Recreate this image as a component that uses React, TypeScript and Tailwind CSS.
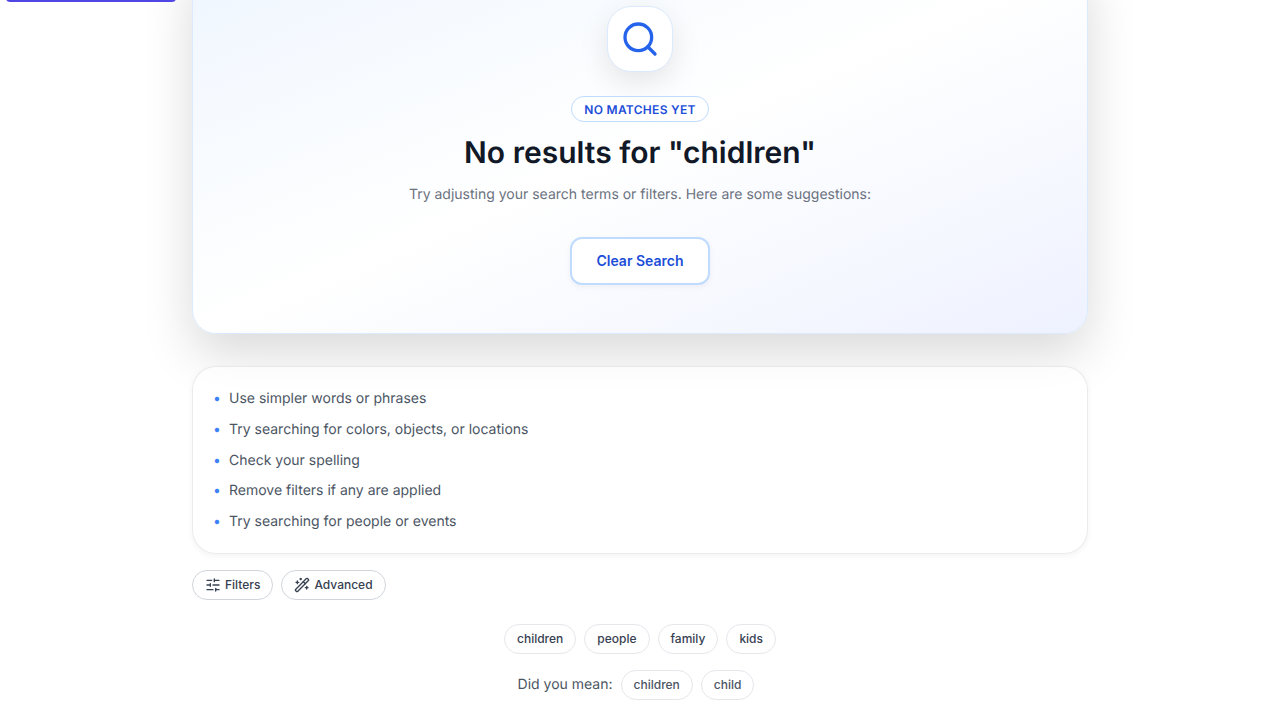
import { Search, SlidersHorizontal, WandSparkles } from "lucide-react";

const tips = [
  "Use simpler words or phrases",
  "Try searching for colors, objects, or locations",
  "Check your spelling",
  "Remove filters if any are applied",
  "Try searching for people or events",
];

const popular = ["children", "people", "family", "kids"];
const corrections = ["children", "child"];

export default function App() {
  return (
    <div className="relative min-h-screen overflow-hidden bg-white font-['Inter',sans-serif] text-[#111827] antialiased [text-rendering:geometricPrecision]">
      <a
        href="#results"
        aria-label="Skip to main content"
        className="absolute -top-[38px] left-[6px] z-10 h-10 w-[170px] rounded bg-[#4f46e5]"
      />

      <main id="results" className="mx-auto -mt-[43px] max-w-4xl pb-5">
        <section className="flex flex-col items-center rounded-3xl border border-[#dbeafe] bg-linear-to-br from-[#eff6ff] via-white to-[#eef2ff] p-12 text-center shadow-[0_20px_50px_rgba(0,0,0,0.15)]">
          <div className="rounded-3xl border border-[#dbeafe] bg-white p-3 shadow-[0_10px_30px_rgba(0,0,0,0.1)]">
            <Search className="size-10 text-[#2563eb]" aria-hidden="true" />
          </div>
          <span className="mt-6 rounded-full border border-[#bfdbfe] bg-white/80 px-3 pt-[5px] pb-[3px] text-xs font-semibold tracking-wide text-[#1d4ed8] uppercase">
            No matches yet
          </span>
          <h1 className="mt-[13px] text-3xl font-semibold">No results for "chidlren"</h1>
          <p className="mt-3 text-sm leading-[23px] text-[#6b7280]">
            Try adjusting your search terms or filters. Here are some suggestions:
          </p>
          <button
            type="button"
            className="mt-[31px] rounded-xl border-2 border-[#bfdbfe] bg-white px-6 py-3 text-sm font-semibold text-[#1d4ed8] shadow-[0_2px_6px_rgba(0,0,0,0.05)]"
          >
            Clear Search
          </button>
        </section>

        <section className="mt-8 rounded-3xl border border-black/8 bg-white/70 px-5 pt-[21px] pb-[19px] shadow-[0_2px_6px_rgba(0,0,0,0.05)]">
          <ul className="flex flex-col gap-2 text-sm leading-relaxed text-[#4b5563]">
            {tips.map((tip) => (
              <li key={tip} className="flex gap-2">
                <span className="w-2 text-center text-[#3b82f6]" aria-hidden="true">
                  •
                </span>
                <span>{tip}</span>
              </li>
            ))}
          </ul>
        </section>

        <div className="mt-4 flex gap-2 text-xs font-medium text-[#374151]">
          <button
            type="button"
            className="flex items-center gap-1 rounded-full border border-[#d1d5db] bg-white px-3 py-1.5"
          >
            <SlidersHorizontal className="size-4" aria-hidden="true" />
            Filters
          </button>
          <button
            type="button"
            className="flex items-center gap-1 rounded-full border border-[#d1d5db] bg-white px-3 py-1.5"
          >
            <WandSparkles className="size-4" aria-hidden="true" />
            Advanced
          </button>
        </div>

        <div className="mt-6 flex flex-wrap justify-center gap-2 text-xs font-medium text-[#374151]">
          {popular.map((term) => (
            <button
              key={term}
              type="button"
              className="rounded-full border border-[#e5e7eb] bg-white px-3 py-1.5"
            >
              {term}
            </button>
          ))}
        </div>

        <div className="mt-4 flex flex-wrap items-baseline justify-center gap-2 pr-2 text-[#4b5563]">
          <span className="text-sm">Did you mean:</span>
          {corrections.map((term) => (
            <button
              key={term}
              type="button"
              className="rounded-full border border-[#e5e7eb] bg-white px-3 py-1.5 text-xs font-medium"
            >
              {term}
            </button>
          ))}
        </div>
      </main>
    </div>
  );
}
